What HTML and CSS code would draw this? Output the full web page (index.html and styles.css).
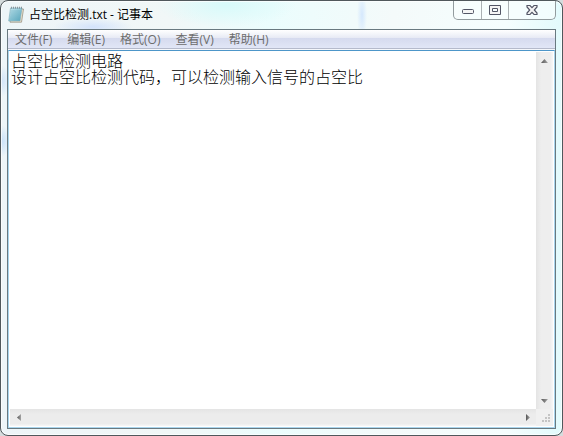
FILE: index.html
```html
<!DOCTYPE html>
<html lang="zh-CN">
<head>
<meta charset="utf-8">
<title>占空比检测.txt - 记事本</title>
<link rel="stylesheet" href="styles.css">
</head>
<body>
<main class="window">
  <header class="titlebar">
    <svg class="app-icon" width="16" height="17" viewBox="0 0 16 17" aria-hidden="true">
      <defs><linearGradient id="pad" x1="0" y1="0" x2="1" y2="1"><stop offset="0" stop-color="#c4e6ee"/><stop offset="1" stop-color="#5cabc0"/></linearGradient></defs>
      <path d="M4 3H15.500L13.500 16.200H2z" fill="#eee3cd" stroke="#8c8878" stroke-width=".7"/>
      <path d="M2.500 2H14L12 15H.7z" fill="url(#pad)" stroke="#7ba9b8" stroke-width=".6"/>
      <path d="M3 5H13M2.700 7H12.700M2.400 9H12.400M2.100 11H12M1.800 13H11.800" stroke="#3f8dab" stroke-width=".5" opacity=".5"/>
      <path d="M3.500 .7V2.700M5.500 .7V2.700M7.500 .7V2.700M9.500 .7V2.700M11.500 .7V2.700M13.500 .7V2.700" stroke="#78858a" stroke-width=".8"/>
    </svg>
    <h1 class="title">占空比检测.txt - 记事本</h1>
    <div class="controls">
      <button class="control" aria-label="最小化"><svg width="14" height="12" viewBox="0 0 14 12"><rect x="1.500" y="5.500" width="11" height="4" rx="1" fill="#f5f5f5" stroke="#535666"/></svg></button>
      <button class="control" aria-label="最大化"><svg width="14" height="12" viewBox="0 0 14 12"><path d="M1.500 1.500H12.500V10.500H1.500ZM4.500 4.500V7.500H9.500V4.500Z" fill="#f5f5f5" fill-rule="evenodd" stroke="#535666"/></svg></button>
      <button class="control close" aria-label="关闭"><svg width="14" height="12" viewBox="0 0 14 12"><path d="M2 1.500H5L7 3.700 9 1.500H12V3L9.300 6 12 9V10.500H9L7 8.300 5 10.500H2V9L4.700 6 2 3Z" fill="#f5f5f5" stroke="#535666" stroke-width="1.200"/></svg></button>
    </div>
  </header>
  <section class="client">
    <nav class="menu" aria-label="菜单">
      <button class="menu-item">文件(F)</button>
      <button class="menu-item">编辑(E)</button>
      <button class="menu-item">格式(O)</button>
      <button class="menu-item">查看(V)</button>
      <button class="menu-item">帮助(H)</button>
    </nav>
    <div class="editor">
      <textarea class="text" aria-label="文本" spellcheck="false" wrap="off">占空比检测电路
设计占空比检测代码，可以检测输入信号的占空比</textarea>
      <div class="scroll vertical">
        <button class="arrow" aria-label="向上滚动"><svg width="7" height="4" viewBox="0 0 7 4"><path d="M0 4L3.500 0 7 4Z" fill="url(#arrow)"/></svg></button>
        <button class="arrow" aria-label="向下滚动"><svg width="7" height="4" viewBox="0 0 7 4"><path d="M0 0H7L3.500 4Z" fill="url(#arrow)"/></svg></button>
      </div>
      <div class="scroll horizontal">
        <button class="arrow" aria-label="向左滚动"><svg width="4" height="7" viewBox="0 0 4 7"><defs><linearGradient id="arrow"><stop offset="0" stop-color="#555"/><stop offset="1" stop-color="#a5a5a5"/></linearGradient></defs><path d="M4 0V7L0 3.500Z" fill="url(#arrow)"/></svg></button>
        <button class="arrow" aria-label="向右滚动"><svg width="4" height="7" viewBox="0 0 4 7"><path d="M0 0V7L4 3.500Z" fill="url(#arrow)"/></svg></button>
      </div>
      <div class="grip"><svg width="10" height="10" viewBox="0 0 10 10" aria-hidden="true"><path d="M7 1h2M4 4h2M7 4h2M1 7h2M4 7h2M7 7h2" stroke="#c4c4c4" stroke-width="2"/></svg></div>
    </div>
  </section>
</main>
</body>
</html>
```
FILE: styles.css
```css
* { box-sizing: border-box; }
html, body { height: 100%; }
body {
  margin: 0;
  background: #d5dcdd;
  font: 12px/16px "Open Sans", "Noto Sans CJK SC", sans-serif;
}
button {
  margin: 0;
  padding: 0;
  border: 0;
  background: none;
  font: inherit;
  color: inherit;
}
svg { display: block; flex: none; }
.window {
  display: flex;
  flex-direction: column;
  height: 100vh;
  padding: 0 6px 6px;
  border: 1px solid #50585c;
  border-radius: 8px;
  background:
    radial-gradient(ellipse 40px 9px at 92px 26px, #d3e3fb, transparent),
    radial-gradient(ellipse 10px 16px at 0 80px, #cfe3fa, transparent),
    radial-gradient(ellipse 10px 16px at 0 140px, #c6e0fa, transparent),
    radial-gradient(ellipse 5px 24px at 361px 14px, #d5e8fd, transparent),
    radial-gradient(ellipse 70px 22px at 225px 4px, #d8fafa, transparent),
    linear-gradient(90deg, #edf5f8, #f1f7f7 30%, #ebfdfd 48%, #f4fafa 70%, #f5fefe 90%, #e2fafc);
  box-shadow: inset 0 0 0 1px #ffffffb0;
}
.titlebar {
  display: flex;
  align-items: flex-start;
  flex: none;
  height: 28px;
}
.app-icon { margin: 5px 0 0 1px; }
.title {
  flex: 1;
  margin: 6px 0 0 5px;
  font: inherit;
  color: #000;
}
.controls {
  display: flex;
  height: 19px;
  border: 1px solid #929b9e;
  border-top: 0;
  border-radius: 0 0 5px 5px;
  background: #f8fdfdb0;
  overflow: hidden;
}
.control {
  display: flex;
  align-items: center;
  justify-content: center;
  width: 28px;
  border-right: 1px solid #aab1b4;
}
.control + .control { width: 27px; }
.control.close { width: 46px; border-right: 0; }
.client {
  display: flex;
  flex: 1;
  flex-direction: column;
  min-height: 0;
  border: 1px solid #697980;
}
.menu {
  display: flex;
  flex: none;
  gap: 15px;
  height: 20px;
  padding: 0 7px;
  border-bottom: 1px solid #f5f7fb;
  background: linear-gradient(#fff, #e8ebf5 40%, #d5daee 41%, #e1e6f6 94%, #b5bacb 95%);
  color: #6d6d6d;
}
.menu-item { white-space: nowrap; }
.editor {
  display: grid;
  flex: 1;
  grid-template-columns: 1fr 17px;
  grid-template-rows: 1fr 17px;
  min-height: 0;
  padding: 1px;
  border: 1px solid #a9d5ed;
  border-top-color: #4d96c9;
  background: #fff;
}
.text {
  width: 100%;
  height: 100%;
  margin: 0;
  padding: 0 1px;
  border: 0;
  outline: 0;
  resize: none;
  overflow: hidden;
  background: #fff;
  color: #000;
  font: 300 16px/16px "Noto Sans CJK SC", sans-serif;
}
.scroll { display: flex; justify-content: space-between; }
.vertical {
  flex-direction: column;
  background: linear-gradient(90deg, #e4e4e4, #eee 30%, #eee 85%, #f7f7f7);
}
.horizontal { background: linear-gradient(#e4e4e4, #ececec 30%, #ececec 85%, #f7f7f7); }
.arrow {
  display: flex;
  align-items: center;
  justify-content: center;
  width: 17px;
  height: 17px;
}
.grip {
  display: flex;
  align-items: flex-end;
  justify-content: flex-end;
  padding: 2px;
  background: #f0f0f0;
}
```
